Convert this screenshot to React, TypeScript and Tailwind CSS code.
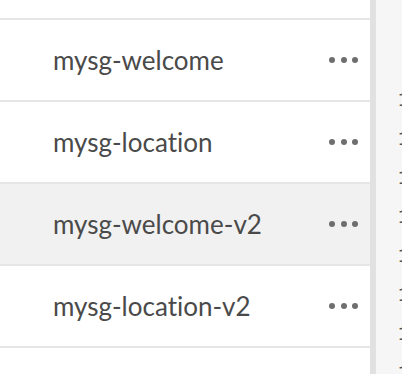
const items = [
  { name: "mysg-welcome", active: false },
  { name: "mysg-location", active: false },
  { name: "mysg-welcome-v2", active: true },
  { name: "mysg-location-v2", active: false },
];

function Dots() {
  return (
    <div className="flex items-center gap-[5.5px]">
      <span className="block w-[6px] h-[6px] rounded-full bg-[#6e6e6e]" />
      <span className="block w-[6px] h-[6px] rounded-full bg-[#6e6e6e]" />
      <span className="block w-[6px] h-[6px] rounded-full bg-[#6e6e6e]" />
    </div>
  );
}

export default function App() {
  return (
    <div className="flex w-[402px] h-[374px] overflow-hidden bg-white font-['Lato',sans-serif]">
      <div className="w-[370px] flex flex-col">
        <div className="h-[18px] bg-white" />
        {items.map((item) => (
          <div
            key={item.name}
            className={`h-[82px] border-t-2 border-[#e6e6e6] flex items-center pl-[53px] pr-[12px] ${item.active ? "bg-[#f1f1f1]" : "bg-white"}`}
          >
            <span className="flex-1 text-[26px] text-[#4a4a4a] leading-none [font-variant-ligatures:none]">{item.name}</span>
            <Dots />
          </div>
        ))}
        <div className="flex-1 border-t-2 border-[#e6e6e6] bg-white" />
      </div>
      <div className="w-[6px] bg-[#e1e1e1]" />
      <div className="flex-1 bg-[#f6f6f6] overflow-hidden pt-[81px] pl-[22px]">
        <div className="text-[22px] leading-[39px] text-[#505050] font-['Liberation_Mono',monospace]">
          {Array.from({ length: 8 }).map((_, i) => (
            <div key={i}>1</div>
          ))}
        </div>
      </div>
    </div>
  );
}
